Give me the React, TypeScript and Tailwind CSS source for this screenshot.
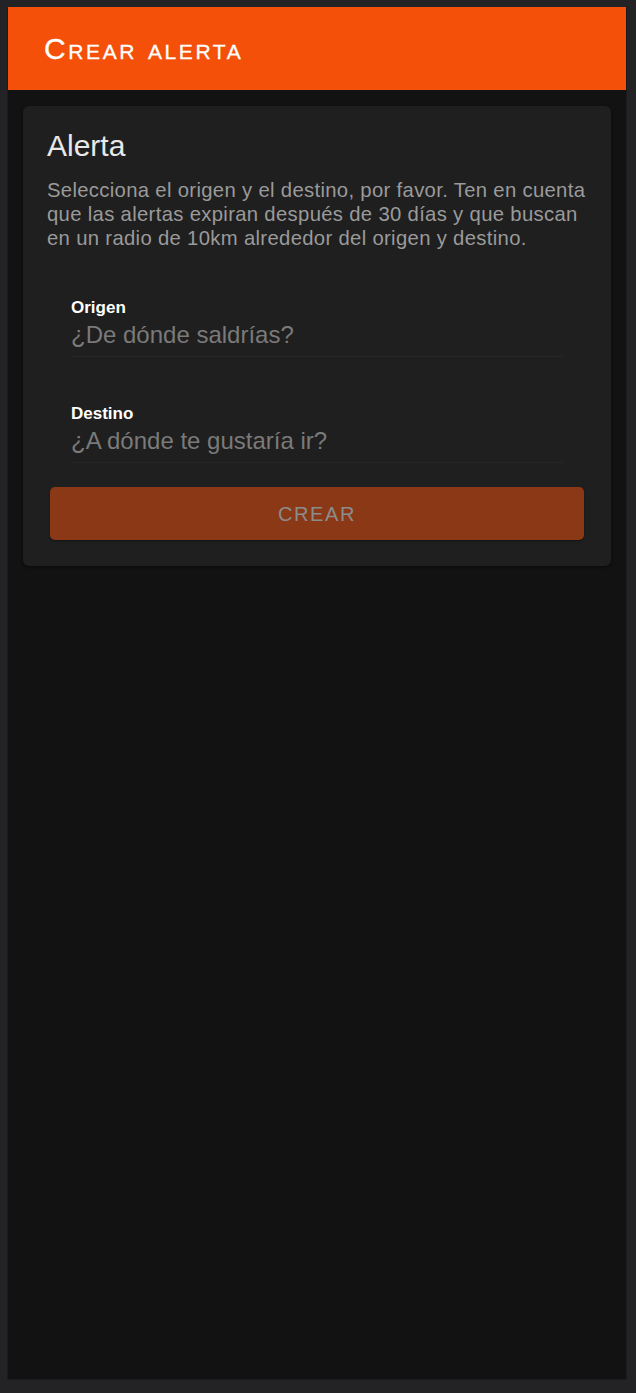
import React from "react";

export default function App() {
  return (
    <div className="w-[636px] h-[1393px] bg-[#232325] pt-[7px] pl-[7px] pr-[9px] pb-[13px]" style={{ fontFamily: '"Liberation Sans", Arial, sans-serif' }}>
      <div className="h-full border border-[#1b1b1b] bg-[#121212] flex flex-col">
        <div className="h-[83px] bg-[#f4500a] flex items-center pl-[36px] -mt-px">
          <h1 className="text-white text-[30px] tracking-[2.6px] [-webkit-text-stroke:0.3px_white]" style={{ fontVariant: "small-caps" }}>Crear alerta</h1>
        </div>
        <div className="px-[15px] pt-[16px]">
          <div className="bg-[#1f1f1f] rounded-[6px] px-[24px] pt-[22px] pb-[26px] shadow-[0_1px_3px_rgba(0,0,0,0.5)]">
            <h2 className="text-[#e8e8e8] text-[30px] leading-[36px]">Alerta</h2>
            <p className="mt-[14px] text-[#9a9a9a] text-[20.3px] leading-[24px] tracking-[0.32px]">
              Selecciona el origen y el destino, por favor. Ten en cuenta que las alertas expiran después de 30 días y que buscan en un radio de 10km alrededor del origen y destino.
            </p>
            <div className="px-[24px] mt-[48px]">
              <div className="border-b border-[#262626] pb-[6px]">
                <div className="text-white text-[17px] leading-[20px] font-bold">Origen</div>
                <div className="mt-[2px] text-[#7a7a7a] text-[24px] leading-[30px]">¿De dónde saldrías?</div>
              </div>
              <div className="border-b border-[#262626] pb-[6px] mt-[47px]">
                <div className="text-white text-[17px] leading-[20px] font-bold">Destino</div>
                <div className="mt-[2px] text-[#7a7a7a] text-[24px] leading-[30px]">¿A dónde te gustaría ir?</div>
              </div>
            </div>
            <div className="px-[3px] mt-[24px]">
              <button className="w-full h-[53px] rounded-[5px] bg-[#8b3816] text-[#8c8c8c] text-[20px] tracking-[1.6px] shadow-[0_1px_2px_rgba(0,0,0,0.4)]">
                CREAR
              </button>
            </div>
          </div>
        </div>
      </div>
    </div>
  );
}
